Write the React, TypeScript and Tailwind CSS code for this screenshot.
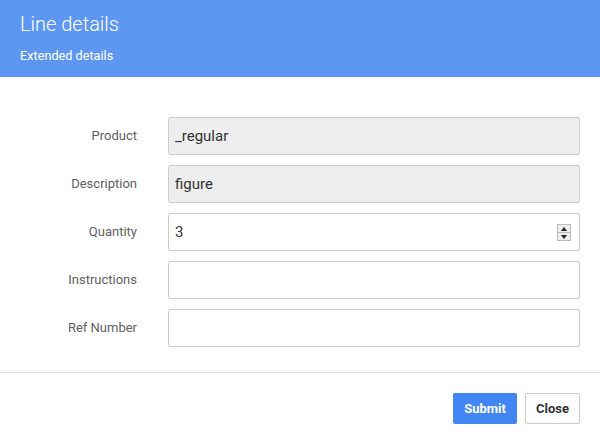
const Row = ({ label, children }: { label: string; children: React.ReactNode }) => (
  <div className="flex items-center h-[38px]">
    <label className="w-[137px] text-right text-[13px] text-[#616161]">{label}</label>
    <div className="ml-[31px] flex-1">{children}</div>
  </div>
);

const Spinner = () => (
  <div className="absolute right-[8px] top-[10px] flex flex-col w-[14px] h-[17px] border border-[#bbb] bg-[#eee]">
    <div className="flex-1 flex items-center justify-center border-b border-[#bbb]">
      <span className="block w-0 h-0 border-l-[3px] border-r-[3px] border-b-[4px] border-l-transparent border-r-transparent border-b-[#222]" />
    </div>
    <div className="flex-1 flex items-center justify-center">
      <span className="block w-0 h-0 border-l-[3px] border-r-[3px] border-t-[4px] border-l-transparent border-r-transparent border-t-[#222]" />
    </div>
  </div>
);

export default function App() {
  return (
    <div className="w-[600px] h-[443px] bg-white font-['Roboto',sans-serif] overflow-hidden">
      <header className="h-[77px] bg-[#5e97f2] px-5 pt-[11px]">
        <h1 className="text-[20px] font-light text-white leading-[26px]">Line details</h1>
        <p className="mt-[10px] text-[12.7px] text-white leading-[17px]">Extended details</p>
      </header>
      <div className="pt-[40px] pr-5 flex flex-col gap-[10px]">
        <Row label="Product">
          <div className="h-[38px] px-[6px] flex items-center bg-[#eee] border border-[#ccc] rounded-[2px] text-[15px] text-[#333]">_regular</div>
        </Row>
        <Row label="Description">
          <div className="h-[38px] px-[6px] flex items-center bg-[#eee] border border-[#ccc] rounded-[2px] text-[15px] text-[#333]">figure</div>
        </Row>
        <Row label="Quantity">
          <div className="relative h-[38px] px-[6px] flex items-center bg-white border border-[#ccc] rounded-[2px] text-[15px] text-[#333]">
            3
            <Spinner />
          </div>
        </Row>
        <Row label="Instructions">
          <div className="h-[38px] bg-white border border-[#ccc] rounded-[2px]" />
        </Row>
        <Row label="Ref Number">
          <div className="h-[38px] bg-white border border-[#ccc] rounded-[2px]" />
        </Row>
      </div>
      <div className="mt-[25px] border-t border-[#ddd]" />
      <div className="flex justify-end gap-2 pr-5 pt-[20px]">
        <button className="h-[31px] w-[64px] bg-[#4286f4] text-white text-[13px] font-bold rounded-[2px]">Submit</button>
        <button className="h-[31px] w-[55px] bg-white border border-[#ccc] text-[#333] text-[13px] font-bold rounded-[2px]">Close</button>
      </div>
    </div>
  );
}
